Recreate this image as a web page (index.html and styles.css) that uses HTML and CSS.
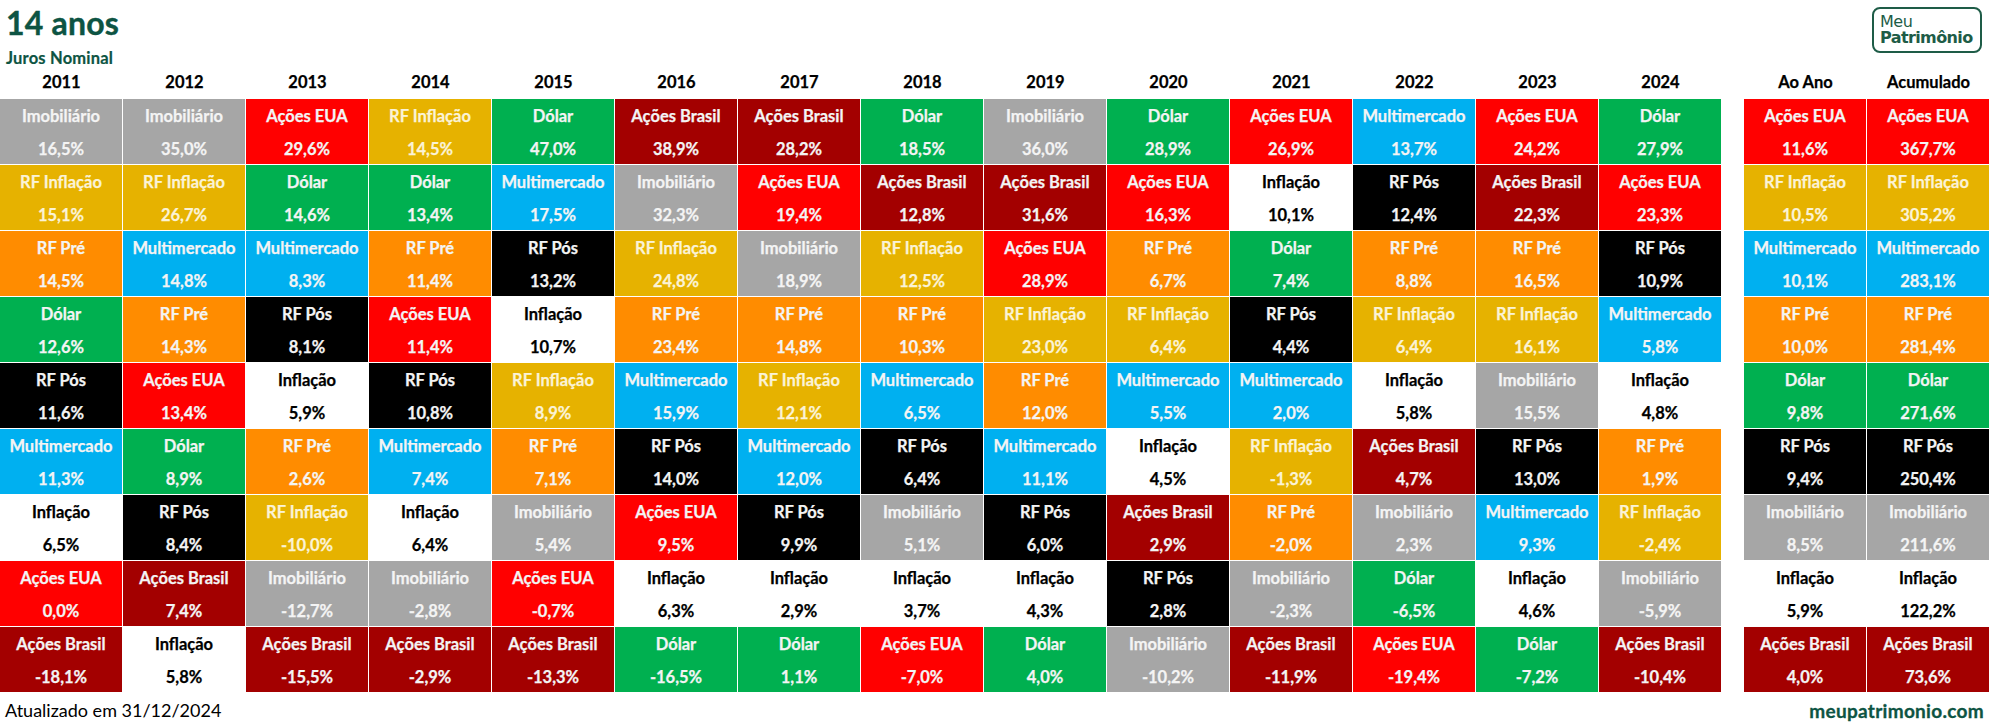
FILE: index.html
```html
<!DOCTYPE html>
<html lang="pt-BR">
<head>
<meta charset="utf-8">
<title>14 anos - Juros Nominal</title>
<link rel="stylesheet" href="styles.css">
</head>
<body>
<header class="top">
  <div class="titles">
    <h1 class="title">14 anos</h1>
    <div class="subtitle">Juros Nominal</div>
  </div>
  <div class="logo"><span class="logo-a">Meu</span><span class="logo-b">Patrimônio</span></div>
</header>
<main class="board">
  <section class="grp">
    <div class="col"><div class="yr">2011</div>
      <div class="c imo"><b>Imobiliário</b><b>16,5%</b></div>
      <div class="c rfi"><b>RF Inflação</b><b>15,1%</b></div>
      <div class="c pre"><b>RF Pré</b><b>14,5%</b></div>
      <div class="c dol"><b>Dólar</b><b>12,6%</b></div>
      <div class="c pos"><b>RF Pós</b><b>11,6%</b></div>
      <div class="c mul"><b>Multimercado</b><b>11,3%</b></div>
      <div class="c inf"><b>Inflação</b><b>6,5%</b></div>
      <div class="c eua"><b>Ações EUA</b><b>0,0%</b></div>
      <div class="c bra"><b>Ações Brasil</b><b>-18,1%</b></div>
    </div>
    <div class="col"><div class="yr">2012</div>
      <div class="c imo"><b>Imobiliário</b><b>35,0%</b></div>
      <div class="c rfi"><b>RF Inflação</b><b>26,7%</b></div>
      <div class="c mul"><b>Multimercado</b><b>14,8%</b></div>
      <div class="c pre"><b>RF Pré</b><b>14,3%</b></div>
      <div class="c eua"><b>Ações EUA</b><b>13,4%</b></div>
      <div class="c dol"><b>Dólar</b><b>8,9%</b></div>
      <div class="c pos"><b>RF Pós</b><b>8,4%</b></div>
      <div class="c bra"><b>Ações Brasil</b><b>7,4%</b></div>
      <div class="c inf"><b>Inflação</b><b>5,8%</b></div>
    </div>
    <div class="col"><div class="yr">2013</div>
      <div class="c eua"><b>Ações EUA</b><b>29,6%</b></div>
      <div class="c dol"><b>Dólar</b><b>14,6%</b></div>
      <div class="c mul"><b>Multimercado</b><b>8,3%</b></div>
      <div class="c pos"><b>RF Pós</b><b>8,1%</b></div>
      <div class="c inf"><b>Inflação</b><b>5,9%</b></div>
      <div class="c pre"><b>RF Pré</b><b>2,6%</b></div>
      <div class="c rfi"><b>RF Inflação</b><b>-10,0%</b></div>
      <div class="c imo"><b>Imobiliário</b><b>-12,7%</b></div>
      <div class="c bra"><b>Ações Brasil</b><b>-15,5%</b></div>
    </div>
    <div class="col"><div class="yr">2014</div>
      <div class="c rfi"><b>RF Inflação</b><b>14,5%</b></div>
      <div class="c dol"><b>Dólar</b><b>13,4%</b></div>
      <div class="c pre"><b>RF Pré</b><b>11,4%</b></div>
      <div class="c eua"><b>Ações EUA</b><b>11,4%</b></div>
      <div class="c pos"><b>RF Pós</b><b>10,8%</b></div>
      <div class="c mul"><b>Multimercado</b><b>7,4%</b></div>
      <div class="c inf"><b>Inflação</b><b>6,4%</b></div>
      <div class="c imo"><b>Imobiliário</b><b>-2,8%</b></div>
      <div class="c bra"><b>Ações Brasil</b><b>-2,9%</b></div>
    </div>
    <div class="col"><div class="yr">2015</div>
      <div class="c dol"><b>Dólar</b><b>47,0%</b></div>
      <div class="c mul"><b>Multimercado</b><b>17,5%</b></div>
      <div class="c pos"><b>RF Pós</b><b>13,2%</b></div>
      <div class="c inf"><b>Inflação</b><b>10,7%</b></div>
      <div class="c rfi"><b>RF Inflação</b><b>8,9%</b></div>
      <div class="c pre"><b>RF Pré</b><b>7,1%</b></div>
      <div class="c imo"><b>Imobiliário</b><b>5,4%</b></div>
      <div class="c eua"><b>Ações EUA</b><b>-0,7%</b></div>
      <div class="c bra"><b>Ações Brasil</b><b>-13,3%</b></div>
    </div>
    <div class="col"><div class="yr">2016</div>
      <div class="c bra"><b>Ações Brasil</b><b>38,9%</b></div>
      <div class="c imo"><b>Imobiliário</b><b>32,3%</b></div>
      <div class="c rfi"><b>RF Inflação</b><b>24,8%</b></div>
      <div class="c pre"><b>RF Pré</b><b>23,4%</b></div>
      <div class="c mul"><b>Multimercado</b><b>15,9%</b></div>
      <div class="c pos"><b>RF Pós</b><b>14,0%</b></div>
      <div class="c eua"><b>Ações EUA</b><b>9,5%</b></div>
      <div class="c inf"><b>Inflação</b><b>6,3%</b></div>
      <div class="c dol"><b>Dólar</b><b>-16,5%</b></div>
    </div>
    <div class="col"><div class="yr">2017</div>
      <div class="c bra"><b>Ações Brasil</b><b>28,2%</b></div>
      <div class="c eua"><b>Ações EUA</b><b>19,4%</b></div>
      <div class="c imo"><b>Imobiliário</b><b>18,9%</b></div>
      <div class="c pre"><b>RF Pré</b><b>14,8%</b></div>
      <div class="c rfi"><b>RF Inflação</b><b>12,1%</b></div>
      <div class="c mul"><b>Multimercado</b><b>12,0%</b></div>
      <div class="c pos"><b>RF Pós</b><b>9,9%</b></div>
      <div class="c inf"><b>Inflação</b><b>2,9%</b></div>
      <div class="c dol"><b>Dólar</b><b>1,1%</b></div>
    </div>
    <div class="col"><div class="yr">2018</div>
      <div class="c dol"><b>Dólar</b><b>18,5%</b></div>
      <div class="c bra"><b>Ações Brasil</b><b>12,8%</b></div>
      <div class="c rfi"><b>RF Inflação</b><b>12,5%</b></div>
      <div class="c pre"><b>RF Pré</b><b>10,3%</b></div>
      <div class="c mul"><b>Multimercado</b><b>6,5%</b></div>
      <div class="c pos"><b>RF Pós</b><b>6,4%</b></div>
      <div class="c imo"><b>Imobiliário</b><b>5,1%</b></div>
      <div class="c inf"><b>Inflação</b><b>3,7%</b></div>
      <div class="c eua"><b>Ações EUA</b><b>-7,0%</b></div>
    </div>
    <div class="col"><div class="yr">2019</div>
      <div class="c imo"><b>Imobiliário</b><b>36,0%</b></div>
      <div class="c bra"><b>Ações Brasil</b><b>31,6%</b></div>
      <div class="c eua"><b>Ações EUA</b><b>28,9%</b></div>
      <div class="c rfi"><b>RF Inflação</b><b>23,0%</b></div>
      <div class="c pre"><b>RF Pré</b><b>12,0%</b></div>
      <div class="c mul"><b>Multimercado</b><b>11,1%</b></div>
      <div class="c pos"><b>RF Pós</b><b>6,0%</b></div>
      <div class="c inf"><b>Inflação</b><b>4,3%</b></div>
      <div class="c dol"><b>Dólar</b><b>4,0%</b></div>
    </div>
    <div class="col"><div class="yr">2020</div>
      <div class="c dol"><b>Dólar</b><b>28,9%</b></div>
      <div class="c eua"><b>Ações EUA</b><b>16,3%</b></div>
      <div class="c pre"><b>RF Pré</b><b>6,7%</b></div>
      <div class="c rfi"><b>RF Inflação</b><b>6,4%</b></div>
      <div class="c mul"><b>Multimercado</b><b>5,5%</b></div>
      <div class="c inf"><b>Inflação</b><b>4,5%</b></div>
      <div class="c bra"><b>Ações Brasil</b><b>2,9%</b></div>
      <div class="c pos"><b>RF Pós</b><b>2,8%</b></div>
      <div class="c imo"><b>Imobiliário</b><b>-10,2%</b></div>
    </div>
    <div class="col"><div class="yr">2021</div>
      <div class="c eua"><b>Ações EUA</b><b>26,9%</b></div>
      <div class="c inf"><b>Inflação</b><b>10,1%</b></div>
      <div class="c dol"><b>Dólar</b><b>7,4%</b></div>
      <div class="c pos"><b>RF Pós</b><b>4,4%</b></div>
      <div class="c mul"><b>Multimercado</b><b>2,0%</b></div>
      <div class="c rfi"><b>RF Inflação</b><b>-1,3%</b></div>
      <div class="c pre"><b>RF Pré</b><b>-2,0%</b></div>
      <div class="c imo"><b>Imobiliário</b><b>-2,3%</b></div>
      <div class="c bra"><b>Ações Brasil</b><b>-11,9%</b></div>
    </div>
    <div class="col"><div class="yr">2022</div>
      <div class="c mul"><b>Multimercado</b><b>13,7%</b></div>
      <div class="c pos"><b>RF Pós</b><b>12,4%</b></div>
      <div class="c pre"><b>RF Pré</b><b>8,8%</b></div>
      <div class="c rfi"><b>RF Inflação</b><b>6,4%</b></div>
      <div class="c inf"><b>Inflação</b><b>5,8%</b></div>
      <div class="c bra"><b>Ações Brasil</b><b>4,7%</b></div>
      <div class="c imo"><b>Imobiliário</b><b>2,3%</b></div>
      <div class="c dol"><b>Dólar</b><b>-6,5%</b></div>
      <div class="c eua"><b>Ações EUA</b><b>-19,4%</b></div>
    </div>
    <div class="col"><div class="yr">2023</div>
      <div class="c eua"><b>Ações EUA</b><b>24,2%</b></div>
      <div class="c bra"><b>Ações Brasil</b><b>22,3%</b></div>
      <div class="c pre"><b>RF Pré</b><b>16,5%</b></div>
      <div class="c rfi"><b>RF Inflação</b><b>16,1%</b></div>
      <div class="c imo"><b>Imobiliário</b><b>15,5%</b></div>
      <div class="c pos"><b>RF Pós</b><b>13,0%</b></div>
      <div class="c mul"><b>Multimercado</b><b>9,3%</b></div>
      <div class="c inf"><b>Inflação</b><b>4,6%</b></div>
      <div class="c dol"><b>Dólar</b><b>-7,2%</b></div>
    </div>
    <div class="col"><div class="yr">2024</div>
      <div class="c dol"><b>Dólar</b><b>27,9%</b></div>
      <div class="c eua"><b>Ações EUA</b><b>23,3%</b></div>
      <div class="c pos"><b>RF Pós</b><b>10,9%</b></div>
      <div class="c mul"><b>Multimercado</b><b>5,8%</b></div>
      <div class="c inf"><b>Inflação</b><b>4,8%</b></div>
      <div class="c pre"><b>RF Pré</b><b>1,9%</b></div>
      <div class="c rfi"><b>RF Inflação</b><b>-2,4%</b></div>
      <div class="c imo"><b>Imobiliário</b><b>-5,9%</b></div>
      <div class="c bra"><b>Ações Brasil</b><b>-10,4%</b></div>
    </div>
  </section>
  <section class="grp">
    <div class="col"><div class="yr">Ao Ano</div>
      <div class="c eua"><b>Ações EUA</b><b>11,6%</b></div>
      <div class="c rfi"><b>RF Inflação</b><b>10,5%</b></div>
      <div class="c mul"><b>Multimercado</b><b>10,1%</b></div>
      <div class="c pre"><b>RF Pré</b><b>10,0%</b></div>
      <div class="c dol"><b>Dólar</b><b>9,8%</b></div>
      <div class="c pos"><b>RF Pós</b><b>9,4%</b></div>
      <div class="c imo"><b>Imobiliário</b><b>8,5%</b></div>
      <div class="c inf"><b>Inflação</b><b>5,9%</b></div>
      <div class="c bra"><b>Ações Brasil</b><b>4,0%</b></div>
    </div>
    <div class="col"><div class="yr">Acumulado</div>
      <div class="c eua"><b>Ações EUA</b><b>367,7%</b></div>
      <div class="c rfi"><b>RF Inflação</b><b>305,2%</b></div>
      <div class="c mul"><b>Multimercado</b><b>283,1%</b></div>
      <div class="c pre"><b>RF Pré</b><b>281,4%</b></div>
      <div class="c dol"><b>Dólar</b><b>271,6%</b></div>
      <div class="c pos"><b>RF Pós</b><b>250,4%</b></div>
      <div class="c imo"><b>Imobiliário</b><b>211,6%</b></div>
      <div class="c inf"><b>Inflação</b><b>122,2%</b></div>
      <div class="c bra"><b>Ações Brasil</b><b>73,6%</b></div>
    </div>
  </section>
</main>
<footer class="foot">
  <span class="updated">Atualizado em 31/12/2024</span>
  <span class="site">meupatrimonio.com</span>
</footer>
</body>
</html>
```

FILE: styles.css
```css
* { box-sizing: border-box; }
html, body { margin: 0; padding: 0; background: #ffffff; }
body {
  width: 1990px;
  height: 727px;
  overflow: hidden;
  font-family: Lato, "Liberation Sans", sans-serif;
  color: #000;
}
.top {
  height: 66px;
  display: flex;
  justify-content: space-between;
  align-items: flex-start;
}
.titles { padding-left: 6px; }
.title {
  margin: 0;
  font-size: 32px;
  font-weight: 700;
  line-height: 46px;
  color: #0d5443;
  letter-spacing: 0.2px;
  -webkit-text-stroke: 0.4px #0d5443;
}
.subtitle {
  font-size: 16.5px;
  font-weight: 700;
  color: #0d5443;
  line-height: 20px;
  margin-top: 2px;
  letter-spacing: 0.2px;
  -webkit-text-stroke: 0.2px #0d5443;
}
.logo {
  flex: 0 0 110px;
  width: 110px;
  height: 46px;
  margin: 7px 8px 0 0;
  border: 2.5px solid #1e5c47;
  border-radius: 8px;
  display: flex;
  flex-direction: column;
  justify-content: center;
  padding-left: 6px;
  font-family: "DejaVu Sans", sans-serif;
  color: #1e5c47;
  line-height: 16px;
}
.logo-a { display: block; font-size: 16px; font-weight: 400; letter-spacing: -0.5px; }
.logo-b { display: block; font-size: 16px; font-weight: 700; letter-spacing: -0.6px; }
.board {
  display: flex;
  gap: 22px;
}
.grp { display: flex; }
.col {
  width: 123px;
  display: flex;
  flex-direction: column;
}
.yr {
  height: 33px;
  line-height: 33px;
  text-align: center;
  font-weight: 700;
  font-size: 16.5px;
  -webkit-text-stroke: 0.25px #000;
}
.c {
  height: 66px;
  border-right: 1px solid #fff;
  border-bottom: 1px solid #fff;
  display: flex;
  flex-direction: column;
  color: #f4f4f4;
}
.c b {
  display: block;
  height: 33px;
  line-height: 34px;
  text-align: center;
  font-size: 16.5px;
  font-weight: 700;
  white-space: nowrap;
  -webkit-text-stroke: 0.25px currentColor;
}
.imo { background: #a6a6a6; }
.rfi { background: #e6b200; color: #fbf3d6; }
.pre { background: #ff8c00; }
.dol { background: #00b050; }
.pos { background: #000000; }
.mul { background: #00b0f0; }
.inf { background: #ffffff; color: #000000; }
.eua { background: #ff0000; }
.bra { background: #a30000; }
.foot {
  height: 34px;
  display: flex;
  justify-content: space-between;
  align-items: center;
  padding: 0 6px 0 5px;
}
.updated { font-size: 18px; font-weight: 400; }
.site {
  font-size: 19px;
  font-weight: 700;
  color: #0d5443;
  letter-spacing: 0.3px;
  -webkit-text-stroke: 0.3px #0d5443;
}
```
